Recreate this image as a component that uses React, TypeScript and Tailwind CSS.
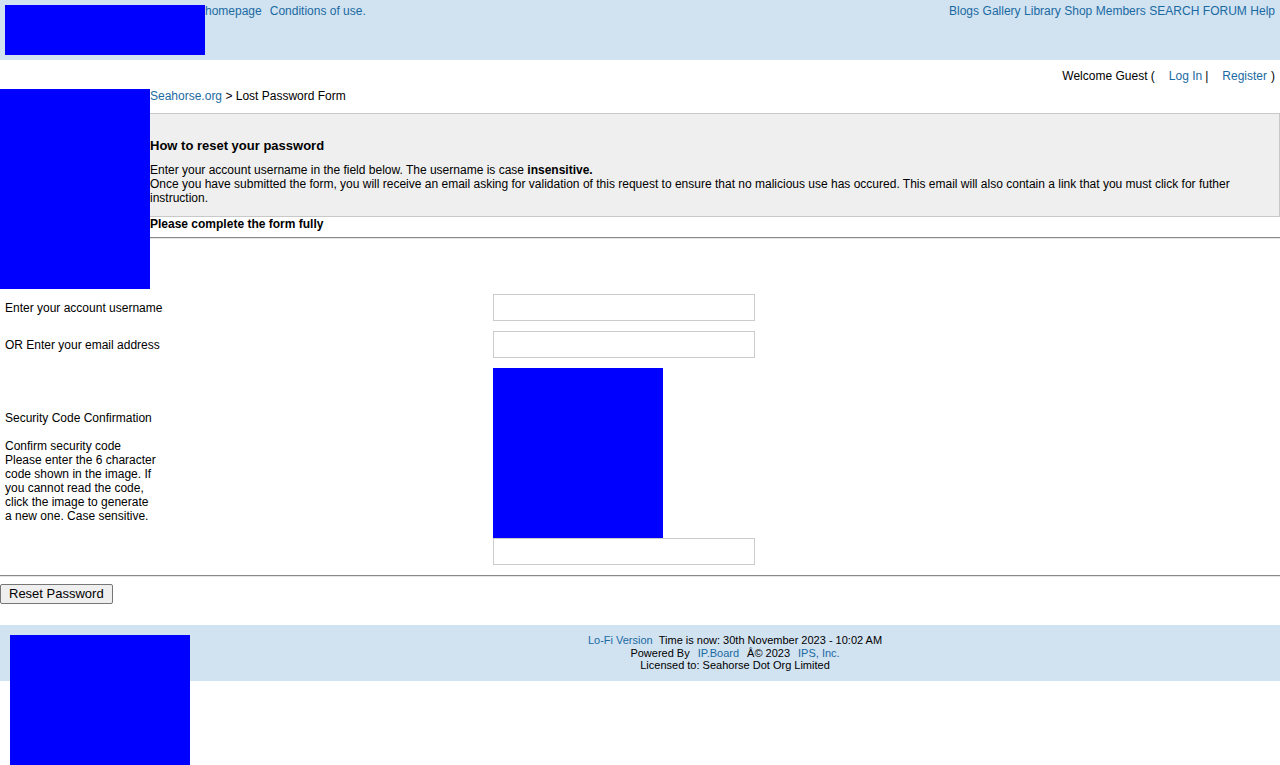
const link = "text-[#1a6aa2] no-underline"

function Header() {
  return (
    <div className="flex h-[60px] items-start justify-between bg-[#d1e2f1]">
      <div className="flex items-start">
        <div className="ml-[5px] mt-[5px] h-[50px] w-[200px] bg-[#0000ff]" />
        <div className="flex gap-[8px] pt-[4px] text-[12px] leading-[14px]">
          <a className={link}>homepage</a>
          <a className={link}>Conditions of use.</a>
        </div>
      </div>
      <div className="flex gap-[3.5px] pr-[5px] pt-[4px] text-[12px] leading-[14px]">
        {["Blogs", "Gallery", "Library", "Shop", "Members", "SEARCH", "FORUM", "Help"].map((l) => (
          <a key={l} className={link}>{l}</a>
        ))}
      </div>
    </div>
  )
}

function Hr() {
  return <div className="border-t border-b border-t-[#8a8a8a] border-b-[#e6e6e6]" />
}

function FormRow({ label, children }: { label: React.ReactNode; children: React.ReactNode }) {
  return (
    <div className="flex items-center py-[5px]">
      <div className="w-[493px] shrink-0 pl-[5px] text-[12px] leading-[14px]">{label}</div>
      <div>{children}</div>
    </div>
  )
}

const inputCls = "block h-[27px] w-[262px] border border-[#cccccc] bg-white"

export default function App() {
  return (
    <div className="min-h-[765px] bg-white text-black font-['Liberation_Sans',Arial,sans-serif]">
      <Header />

      <div className="mt-[9px] flex justify-end pr-[5px] text-[12px] leading-[14px]">
        <span>Welcome Guest (</span>
        <a className={`${link} ml-[14px]`}>Log In</a>
        <span className="ml-[3px]">|</span>
        <a className={`${link} ml-[14px]`}>Register</a>
        <span className="ml-[4px]">)</span>
      </div>

      <div className="mt-[6px] flex items-start">
        <div className="h-[200px] w-[150px] shrink-0 bg-[#0000ff]" />
        <div className="flex-1">
          <div className="text-[12px] leading-[14px]">
            <a className={link}>Seahorse.org</a> &gt; Lost Password Form
          </div>
          <div className="mt-[10px] border border-l-0 border-[#c8c8c8] bg-[#efefef] pb-[11px] pt-[24px]">
            <h3 className="text-[13px] font-bold leading-[16px]">How to reset your password</h3>
            <p className="mt-[9px] text-[12px] leading-[14px]">
              Enter your account username in the field below. The username is case <b>insensitive.</b>
              <br />
              Once you have submitted the form, you will receive an email asking for validation of this request to ensure that no malicious use has occured. This email will also contain a link that you must click for futher instruction.
            </p>
          </div>
          <div className="text-[12px] font-bold leading-[14px]">Please complete the form fully</div>
          <div className="mt-[6px]">
            <Hr />
          </div>
        </div>
      </div>

      <FormRow label="Enter your account username">
        <input className={inputCls} />
      </FormRow>
      <FormRow label="OR Enter your email address">
        <input className={inputCls} />
      </FormRow>
      <FormRow
        label={
          <div>
            <div>Security Code Confirmation</div>
            <div className="mt-[14px] w-[152px]">
              Confirm security code
              <br />
              Please enter the 6 character code shown in the image. If you cannot read the code, click the image to generate a new one. Case sensitive.
            </div>
          </div>
        }
      >
        <div className="h-[170px] w-[170px] bg-[#0000ff]" />
        <input className={inputCls} />
      </FormRow>

      <div className="mt-[5px]">
        <Hr />
      </div>
      <div className="mt-[4px]">
        <button className="h-[20px] rounded-[2px] border border-[#767676] bg-[#efefef] px-[8px] text-[13px] leading-[16px] text-black">
          Reset Password
        </button>
      </div>

      <div className="mt-[20px] flex h-[56px] items-start bg-[#d1e2f1]">
        <div className="ml-[10px] mt-[10px] h-[130px] w-[180px] shrink-0 bg-[#0000ff]" />
        <div className="flex-1 pt-[9px] text-center text-[11px] leading-[12.5px]">
          <div>
            <a className={link}>Lo-Fi Version</a>
            <span className="ml-[6px]">Time is now: 30th November 2023 - 10:02 AM</span>
          </div>
          <div>
            <span>Powered By</span>
            <a className={`${link} ml-[8px]`}>IP.Board</a>
            <span className="ml-[8px]">Â© 2023</span>
            <a className={`${link} ml-[8px]`}>IPS, Inc.</a>
          </div>
          <div>Licensed to: Seahorse Dot Org Limited</div>
        </div>
      </div>
    </div>
  )
}
